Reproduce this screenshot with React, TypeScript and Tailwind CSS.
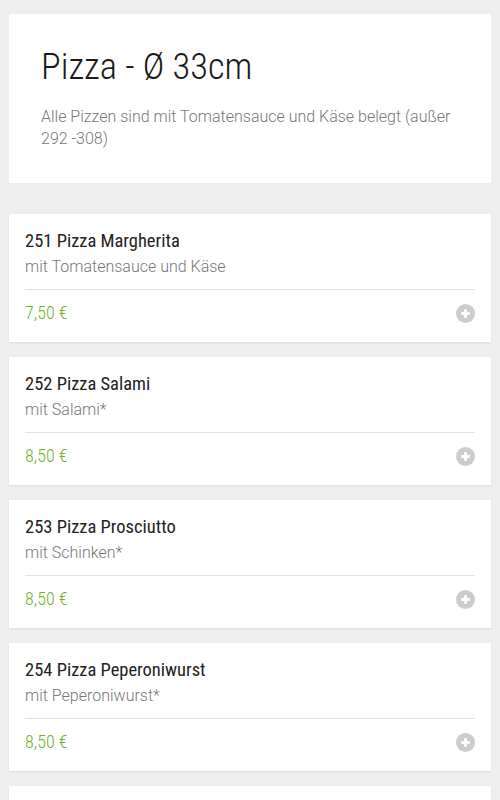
const items = [
  { name: '251 Pizza Margherita', desc: 'mit Tomatensauce und Käse', price: '7,50 €' },
  { name: '252 Pizza Salami', desc: 'mit Salami*', price: '8,50 €' },
  { name: '253 Pizza Prosciutto', desc: 'mit Schinken*', price: '8,50 €' },
  { name: '254 Pizza Peperoniwurst', desc: 'mit Peperoniwurst*', price: '8,50 €' },
  { name: '255 Pizza Funghi', desc: 'mit Champignons', price: '8,50 €' },
];

const condensed = { fontFamily: '"Roboto Condensed", "Liberation Sans Narrow", Roboto, sans-serif' };

function PlusIcon() {
  return (
    <svg width="19" height="19" viewBox="0 0 20 20">
      <circle cx="10" cy="10" r="10" fill="#cccccc" />
      <path d="M10 5.5v9M5.5 10h9" stroke="#fff" strokeWidth="3" />
    </svg>
  );
}

export default function App() {
  return (
    <div className="h-[800px] overflow-hidden bg-[#eeeeee] px-[9px] pt-[14px]" style={{ fontFamily: 'Roboto, sans-serif' }}>
      <section className="bg-white px-8 pt-[31px] pb-[33px]">
        <h1 className="text-[36.5px] leading-[44px] font-light text-[#1a1a1a]" style={condensed}>Pizza - Ø 33cm</h1>
        <p className="mt-[17px] text-[16px] leading-[22px] font-light text-[#777]">
          Alle Pizzen sind mit Tomatensauce und Käse belegt (außer 292 -308)
        </p>
      </section>
      <div className="mt-[31px] flex flex-col gap-[15px]">
        {items.map((item) => (
          <div key={item.name} className="h-[128px] shrink-0 bg-white px-4 pt-[15px] shadow-[0_1px_2px_rgba(0,0,0,0.08)]">
            <div className="text-[18.5px] leading-[24px] text-[#222]" style={condensed}>{item.name}</div>
            <div className="mt-[4px] text-[16px] leading-[20px] font-light text-[#777]">{item.desc}</div>
            <div className="mt-[12px] flex items-center justify-between border-t border-[#e2e2e2] pt-[11px]">
              <span className="text-[18px] leading-[24px] font-light text-[#6fb32a]" style={condensed}>{item.price}</span>
              <PlusIcon />
            </div>
          </div>
        ))}
      </div>
    </div>
  );
}
